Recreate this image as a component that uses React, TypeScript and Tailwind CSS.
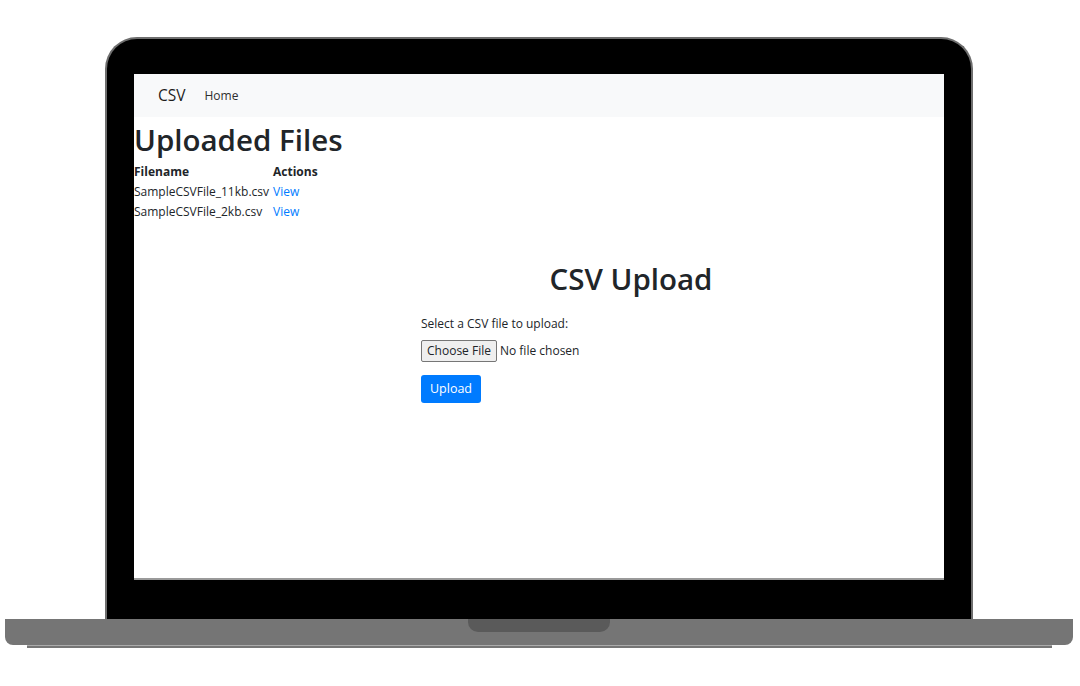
const files = ["SampleCSVFile_11kb.csv", "SampleCSVFile_2kb.csv"];

function Navbar() {
  return (
    <nav className="flex h-[43px] items-center gap-[19px] bg-[#f8f9fa] pl-[24px]">
      <span className="text-[15.5px] text-[#1c1c1c]">CSV</span>
      <span className="text-[12px] text-[#2e2e2e]">Home</span>
    </nav>
  );
}

function UploadedFiles() {
  return (
    <section>
      <h1 className="h-[45px] text-[29.5px] leading-[45px] font-semibold text-[#212529]">Uploaded Files</h1>
      <table className="text-[12px] text-[#212529]">
        <thead>
          <tr className="h-[20px]">
            <th className="pr-[4px] text-left font-bold">Filename</th>
            <th className="text-left font-bold">Actions</th>
          </tr>
        </thead>
        <tbody>
          {files.map((f) => (
            <tr key={f} className="h-[20px]">
              <td className="pr-[4px]">{f}</td>
              <td className="text-[#007bff]">View</td>
            </tr>
          ))}
        </tbody>
      </table>
    </section>
  );
}

function UploadForm() {
  return (
    <section className="ml-[287px] mt-[38px] flex w-[420px] flex-col">
      <h2 className="text-center text-[29.5px] leading-[38px] font-semibold text-[#212529]">CSV Upload</h2>
      <p className="mt-[17px] text-[12px] leading-[18px] text-[#212529]">Select a CSV file to upload:</p>
      <div className="mt-[7px] flex items-center gap-[3px] text-[12px] text-[#212529]">
        <span className="flex h-[22px] w-[76px] items-center justify-center rounded-[2px] border border-[#767676] bg-[#efefef]">
          Choose File
        </span>
        <span>No file chosen</span>
      </div>
      <span className="mt-[13px] flex h-[28px] w-[60px] items-center justify-center rounded-[3px] bg-[#007bff] text-[12.5px] text-white">
        Upload
      </span>
    </section>
  );
}

export default function App() {
  return (
    <div
      className="flex h-[686px] w-[1080px] flex-col items-center bg-white pt-[37px]"
      style={{ fontFamily: '"Open Sans", "Noto Sans", sans-serif' }}
    >
      {/* lid */}
      <div className="mr-[2px] h-[582px] w-[868px] rounded-t-[32px] border-2 border-b-0 border-[#6e6e6e] bg-black px-[27px] pt-[35px]">
        <div className="h-[506px] w-[810px] border-b-2 border-[#9a9a9a] bg-white">
          <Navbar />
          <UploadedFiles />
          <UploadForm />
        </div>
      </div>
      {/* base */}
      <div className="mr-[2px] h-[26px] w-[1068px] rounded-b-[8px] bg-[#757575]">
        <div className="mx-auto h-[13px] w-[142px] rounded-b-[10px] bg-[#5a5a5a]" />
      </div>
      <div className="mr-[2px] h-[3px] w-[1025px] border-t border-[#ababab] bg-[#757575]" />
    </div>
  );
}
